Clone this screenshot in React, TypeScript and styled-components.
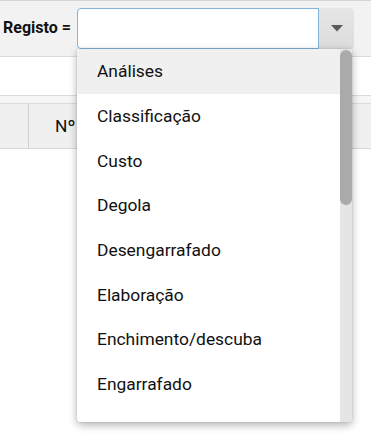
import React from "react";
import styled, { createGlobalStyle } from "styled-components";

const Global = createGlobalStyle`
  html, body { margin: 0; padding: 0; background: #ffffff; }
  body { font-family: Roboto, "Liberation Sans", Arial, sans-serif; color: #111; }
  * { box-sizing: border-box; }
`;

const Page = styled.div`
  width: 371px;
  height: 434px;
  overflow: hidden;
  position: relative;
  background: #fff;
`;

const FilterBar = styled.div`
  height: 57px;
  background: #f2f2f2;
  border-top: 1px solid #d4d4d4;
  border-bottom: 1px solid #dcdcdc;
  display: flex;
  align-items: flex-start;
  padding: 7px 0 0 3px;
  gap: 7px;
`;

const Label = styled.label`
  font-weight: 700;
  font-size: 16px;
  line-height: 40px;
  color: #111;
  width: 67px;
  white-space: nowrap;
`;

const Combo = styled.div`
  position: relative;
  display: flex;
  width: 277px;
  height: 41px;
`;

const TextField = styled.div`
  flex: 1;
  background: #fff;
  border: 1px solid #7eb4de;
  border-radius: 4px 0 0 4px;
`;

const ArrowButton = styled.div`
  width: 35px;
  background: linear-gradient(#e6e6e6, #dcdcdc);
  border-radius: 0 4px 4px 0;
  display: flex;
  align-items: center;
  justify-content: center;
`;

const Menu = styled.div`
  position: absolute;
  left: 0;
  top: 41px;
  width: 275px;
  height: 373px;
  display: flex;
  background: #fff;
  border-radius: 0 0 3px 3px;
  box-shadow: 0 3px 8px rgba(0, 0, 0, 0.3), 0 0 2px rgba(0, 0, 0, 0.15);
  overflow: hidden;
  z-index: 10;
`;

const ItemList = styled.ul`
  flex: 1;
  margin: 0;
  padding: 0;
  list-style: none;
`;

const ScrollTrack = styled.div`
  width: 12px;
  background: #e5e5e5;
  padding-top: 1px;
`;

const ScrollThumb = styled.div`
  height: 155px;
  background: #aaaaaa;
  border-radius: 6px;
`;

const Item = styled.li<{ $active?: boolean }>`
  height: 44.7px;
  display: flex;
  align-items: center;
  padding-left: 20px;
  font-size: 17.4px;
  color: #111;
  white-space: nowrap;
  background: ${(p) => (p.$active ? "#f0f0f0" : "#fff")};
`;

const Spacer = styled.div`
  height: 39px;
  border-bottom: 1px solid #dcdcdc;
  background: #fff;
`;

const Band = styled.div`
  height: 8px;
  background: #f6f6f6;
  border-bottom: 1px solid #dcdcdc;
`;

const HeaderRow = styled.div`
  height: 45px;
  display: flex;
  background: #f0f0f0;
  border-bottom: 1px solid #d6d6d6;
`;

const HeadCell = styled.div<{ $w?: number }>`
  width: ${(p) => (p.$w ? `${p.$w}px` : "auto")};
  flex: ${(p) => (p.$w ? "none" : "1")};
  border-right: ${(p) => (p.$w ? "1px solid #d0d0d0" : "none")};
  display: flex;
  align-items: center;
  padding-left: 26px;
  font-size: 17.4px;
  color: #111;
`;

const options = [
  "Análises",
  "Classificação",
  "Custo",
  "Degola",
  "Desengarrafado",
  "Elaboração",
  "Enchimento/descuba",
  "Engarrafado",
];

export default function App() {
  return (
    <Page>
      <Global />
      <FilterBar>
        <Label>Registo =</Label>
        <Combo>
          <TextField />
          <ArrowButton>
            <svg width="12" height="7" viewBox="0 0 12 7">
              <path d="M0 0 H12 L6 6.5 Z" fill="#5a5a5a" />
            </svg>
          </ArrowButton>
          <Menu>
            <ItemList>
              {options.map((o, i) => (
                <Item key={o} $active={i === 0}>
                  {o}
                </Item>
              ))}
            </ItemList>
            <ScrollTrack>
              <ScrollThumb />
            </ScrollTrack>
          </Menu>
        </Combo>
      </FilterBar>
      <Spacer />
      <Band />
      <HeaderRow>
        <HeadCell $w={29} />
        <HeadCell>Nº</HeadCell>
      </HeaderRow>
    </Page>
  );
}
